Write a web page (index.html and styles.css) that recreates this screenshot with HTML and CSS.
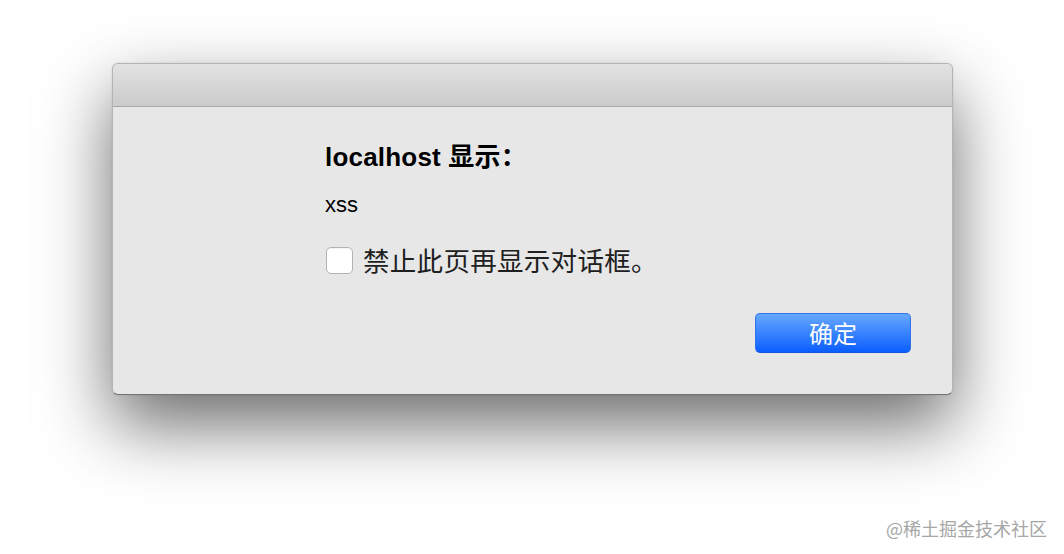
FILE: index.html
```html
<!DOCTYPE html>
<html lang="zh-CN">
<head>
<meta charset="utf-8">
<title>localhost 显示</title>
<link rel="stylesheet" href="styles.css">
</head>
<body>
<div class="page">
  <div class="dialog">
    <div class="titlebar"></div>
    <div class="dialog-body">
      <div class="content">
        <div class="heading">localhost 显示：</div>
        <div class="message">xss</div>
        <label class="check-row">
          <span class="checkbox"></span>
          <span class="check-label">禁止此页再显示对话框。</span>
        </label>
      </div>
      <div class="actions">
        <button class="btn-primary">确定</button>
      </div>
    </div>
  </div>
</div>
<div class="watermark">@稀土掘金技术社区</div>
</body>
</html>
```

FILE: styles.css
```css
html, body {
  margin: 0;
  padding: 0;
  background: #ffffff;
}

body {
  width: 1064px;
  height: 554px;
  overflow: hidden;
  position: relative;
  font-family: "Liberation Sans", Arial, "Noto Sans CJK SC", sans-serif;
  color: #000;
}

.page {
  padding: 63px 111px 0 112px;
}

.dialog {
  width: 841px;
  height: 332px;
  box-sizing: border-box;
  border: 1px solid rgba(0, 0, 0, 0.22);
  border-bottom-color: rgba(0, 0, 0, 0.5);
  border-radius: 6px;
  background: #e7e7e7;
  box-shadow: 0 30px 70px rgba(0, 0, 0, 0.58), 0 0 2px rgba(0, 0, 0, 0.12);
  overflow: hidden;
  display: flex;
  flex-direction: column;
}

.titlebar {
  height: 42px;
  flex: none;
  background: linear-gradient(#e2e2e2, #cbcbcb);
  border-bottom: 1px solid #a8a8a8;
}

.dialog-body {
  flex: 1;
  display: flex;
  flex-direction: column;
  padding: 34px 41px 0 212px;
}

.content {
  display: flex;
  flex-direction: column;
}

.heading {
  font-size: 26px;
  line-height: 32px;
  font-weight: bold;
  letter-spacing: 0.2px;
}

.message {
  margin-top: 18px;
  font-size: 22px;
  line-height: 28px;
}

.check-row {
  margin-top: 24px;
  display: flex;
  align-items: center;
  gap: 10px;
}

.checkbox {
  width: 25px;
  height: 25px;
  flex: none;
  margin-left: 1px;
  background: #ffffff;
  border: 1px solid #b3b3b3;
  border-radius: 5px;
  box-shadow: inset 0 1px 0 rgba(0, 0, 0, 0.04);
}

.check-label {
  font-family: "Noto Sans CJK SC", sans-serif;
  font-size: 26.5px;
  line-height: 34px;
  color: #202020;
  letter-spacing: 0.3px;
}

.actions {
  margin-top: 36px;
  display: flex;
  justify-content: flex-end;
}

.btn-primary {
  width: 156px;
  height: 40px;
  box-sizing: border-box;
  border: 1px solid #2f74ee;
  border-bottom-color: #1553e0;
  border-radius: 5px;
  background: linear-gradient(#66a8fd, #0b5eff);
  color: #ffffff;
  font-family: "Noto Sans CJK SC", sans-serif;
  font-size: 24px;
  line-height: 38px;
  padding: 0;
  cursor: default;
}

.watermark {
  position: absolute;
  right: 17px;
  bottom: 14px;
  font-family: "Noto Sans CJK SC", sans-serif;
  font-size: 18px;
  line-height: 24px;
  color: #a6a6a6;
}
```
